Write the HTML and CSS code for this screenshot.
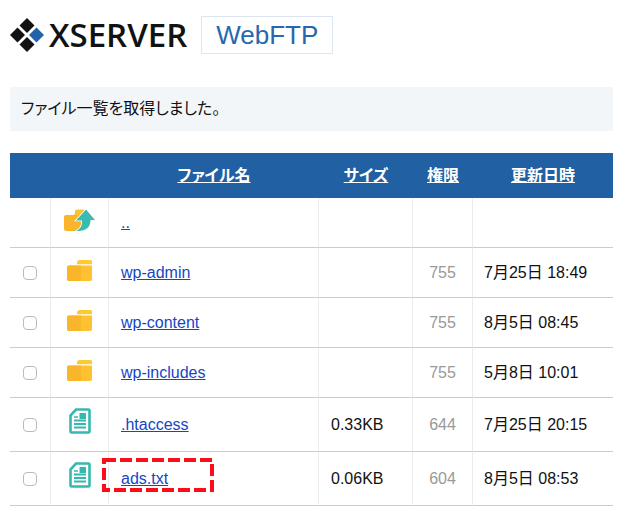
FILE: index.html
```html
<!DOCTYPE html>
<html lang="ja">
  <head>
    <meta charset="UTF-8" />
    <meta name="viewport" content="width=device-width, initial-scale=1.0" />
    <title>WebFTP</title>
    <link rel="stylesheet" href="styles.css">
  </head>

  <body>
    <!-- icons shared by the file rows -->
    <svg class="symbols" width="0" height="0" aria-hidden="true">
      <symbol id="icon-folder" viewBox="0 0 25 21">
        <path d="M12.500 0H23.500Q25 0 25 1.500V4.200H10V3Q10 0 12.500 0Z" fill="#fccb32" />
        <path d="M2 5.500H8.500Q10 5.500 11 5.500H25V19Q25 21 23 21H2Q0 21 0 19V7.500Q0 5.500 2 5.500Z" fill="#fdc132" />
        <path d="M2 5.500H14V21H2Q0 21 0 19V7.500Q0 5.500 2 5.500Z" fill="#fab62b" />
      </symbol>
      <symbol id="icon-up" viewBox="0 0 31 23">
        <path d="M11 4V2.500Q11 0.500 13 0.500H19Q21 0.500 21 2.500V6H9Q11 5.500 11 4Z" fill="#fbc42e" />
        <path d="M2 6H20V18L12 22H2Q0 22 0 20V8Q0 6 2 6Z" fill="#fab62b" />
        <path d="M22 0.500L31 11H26.500C26.500 18 22.500 22.500 12 22C16.500 20 18.500 16.500 18 11.500H12Z" fill="#39bbb2" stroke="#fff" stroke-width="1.600" paint-order="stroke" />
      </symbol>
      <symbol id="icon-file" viewBox="0 0 22 26">
        <path d="M7 1.500H19.500Q20.500 1.500 20.500 2.500V23.500Q20.500 24.500 19.500 24.500H2.500Q1.500 24.500 1.500 23.500V7.500Z" fill="none" stroke="#36b8ae" stroke-width="2.600" />
        <path d="M10.500 5H17V11H10.500Z" fill="#36b8ae" />
        <path d="M5 12.500H17M5 16H17M5 19.500H17" fill="none" stroke="#36b8ae" stroke-width="2" />
        <path d="M5 9H9" fill="none" stroke="#36b8ae" stroke-width="1.500" />
      </symbol>
    </svg>

    <header class="header">
      <div class="logo">
        <svg class="logo-mark" viewBox="0 0 34 34" aria-hidden="true">
          <path d="M17 0L24.500 7.500L17 15L9.500 7.500Z" fill="#101312" />
          <path d="M7.500 9.500L15 17L7.500 24.500L0 17Z" fill="#101312" />
          <path d="M26.500 9.500L34 17L26.500 24.500L19 17Z" fill="#2264ac" />
          <path d="M17 19L24.500 26.500L17 34L9.500 26.500Z" fill="#101312" />
        </svg>
        <span class="logo-text">XSERVER</span>
      </div>
      <h1 class="service">WebFTP</h1>
    </header>

    <p class="message">ファイル一覧を取得しました。</p>

    <table class="files">
      <colgroup>
        <col class="col-check">
        <col class="col-icon">
        <col class="col-name">
        <col class="col-size">
        <col class="col-perm">
        <col>
      </colgroup>
      <thead>
        <tr>
          <th></th>
          <th></th>
          <th><a href="#">ファイル名</a></th>
          <th><a href="#">サイズ</a></th>
          <th><a href="#">権限</a></th>
          <th><a href="#">更新日時</a></th>
        </tr>
      </thead>
      <tbody>
        <tr>
          <td></td>
          <td class="icon"><svg class="up"><use href="#icon-up" /></svg></td>
          <td><a href="#">..</a></td>
          <td></td>
          <td class="perm"></td>
          <td></td>
        </tr>
        <tr>
          <td class="check"><input type="checkbox" aria-label="wp-admin"></td>
          <td class="icon"><svg class="folder"><use href="#icon-folder" /></svg></td>
          <td><a href="#">wp-admin</a></td>
          <td></td>
          <td class="perm">755</td>
          <td>7月25日 18:49</td>
        </tr>
        <tr>
          <td class="check"><input type="checkbox" aria-label="wp-content"></td>
          <td class="icon"><svg class="folder"><use href="#icon-folder" /></svg></td>
          <td><a href="#">wp-content</a></td>
          <td></td>
          <td class="perm">755</td>
          <td>8月5日 08:45</td>
        </tr>
        <tr>
          <td class="check"><input type="checkbox" aria-label="wp-includes"></td>
          <td class="icon"><svg class="folder"><use href="#icon-folder" /></svg></td>
          <td><a href="#">wp-includes</a></td>
          <td></td>
          <td class="perm">755</td>
          <td>5月8日 10:01</td>
        </tr>
        <tr class="file">
          <td class="check"><input type="checkbox" aria-label=".htaccess"></td>
          <td class="icon"><svg class="doc"><use href="#icon-file" /></svg></td>
          <td><a href="#">.htaccess</a></td>
          <td>0.33KB</td>
          <td class="perm">644</td>
          <td>7月25日 20:15</td>
        </tr>
        <tr class="file">
          <td class="check"><input type="checkbox" aria-label="ads.txt"></td>
          <td class="icon"><svg class="doc"><use href="#icon-file" /></svg></td>
          <td class="marked">
            <a href="#">ads.txt</a>
            <svg class="marker" viewBox="0 0 112 34" aria-hidden="true">
              <rect x="2" y="2" width="108" height="30" fill="none" stroke="#fc0d1b" stroke-width="4" stroke-dasharray="12 4" />
            </svg>
          </td>
          <td>0.06KB</td>
          <td class="perm">604</td>
          <td>8月5日 08:53</td>
        </tr>
      </tbody>
    </table>
  </body>
</html>
```
FILE: styles.css
```css
body {
  margin: 0;
  padding: 16px 27px 0 10px;
  background-color: #fff;
  font-family: "Liberation Sans", "Noto Sans CJK JP", sans-serif;
  font-size: 16px;
  line-height: 20px;
  color: #111;
}

.symbols {
  position: absolute;
}

/* Logo and service name */
.header {
  display: flex;
  align-items: center;
  gap: 14px;
}

.logo {
  display: flex;
  align-items: center;
  gap: 5px;
}

.logo-mark {
  width: 34px;
  height: 34px;
}

.logo-text {
  font-family: "Open Sans", "Noto Sans", sans-serif;
  font-size: 33px;
  font-weight: 600;
  line-height: 36px;
  color: #101312;
}

.service {
  margin: 0;
  padding: 0 14px;
  border: 1px solid #dce6f2;
  font-size: 26px;
  font-weight: normal;
  line-height: 36px;
  color: #2767ae;
}

/* Result message */
.message {
  margin: 33px 0 22px;
  padding: 12px 11px;
  background-color: #f3f6f9;
  font-feature-settings: "palt";
}

/* File list */
.files {
  width: 100%;
  table-layout: fixed;
  border-collapse: separate;
  border-spacing: 0;
}

.col-check {
  width: 41px;
}

.col-icon {
  width: 58px;
}

.col-name {
  width: 210px;
}

.col-size {
  width: 94px;
}

.col-perm {
  width: 60px;
}

.files th {
  height: 45px;
  padding: 0;
  background-color: #2060a3;
  font-feature-settings: "palt";
}

.files th a {
  color: #fff;
}

.files td {
  box-sizing: border-box;
  height: 50px;
  padding: 0 11px 0 12px;
  border-right: 1px solid #ebebeb;
  border-bottom: 1px solid #ccc;
}

.files td:last-child {
  padding-left: 11px;
  border-right: none;
}

.files .file td {
  height: 54px;
}

.files td a {
  color: #1546c4;
}

.files .check,
.files .icon {
  padding: 0;
  text-align: center;
}

.files .perm {
  padding: 0;
  text-align: center;
  color: #999;
}

.check input {
  display: block;
  appearance: none;
  width: 14px;
  height: 14px;
  margin: 0 auto;
  border: 1px solid #bbb;
  border-radius: 4px;
  background-color: #fff;
}

.icon svg {
  display: block;
  margin: 0 auto 5px;
}

.folder {
  width: 25px;
  height: 21px;
}

.up {
  width: 31px;
  height: 23px;
}

.icon .doc {
  width: 22px;
  height: 26px;
  margin-bottom: 7px;
}

/* Highlight around the target file */
.marked {
  position: relative;
}

.marker {
  position: absolute;
  top: 6px;
  left: -7px;
  width: 112px;
  height: 34px;
  pointer-events: none;
}
```
